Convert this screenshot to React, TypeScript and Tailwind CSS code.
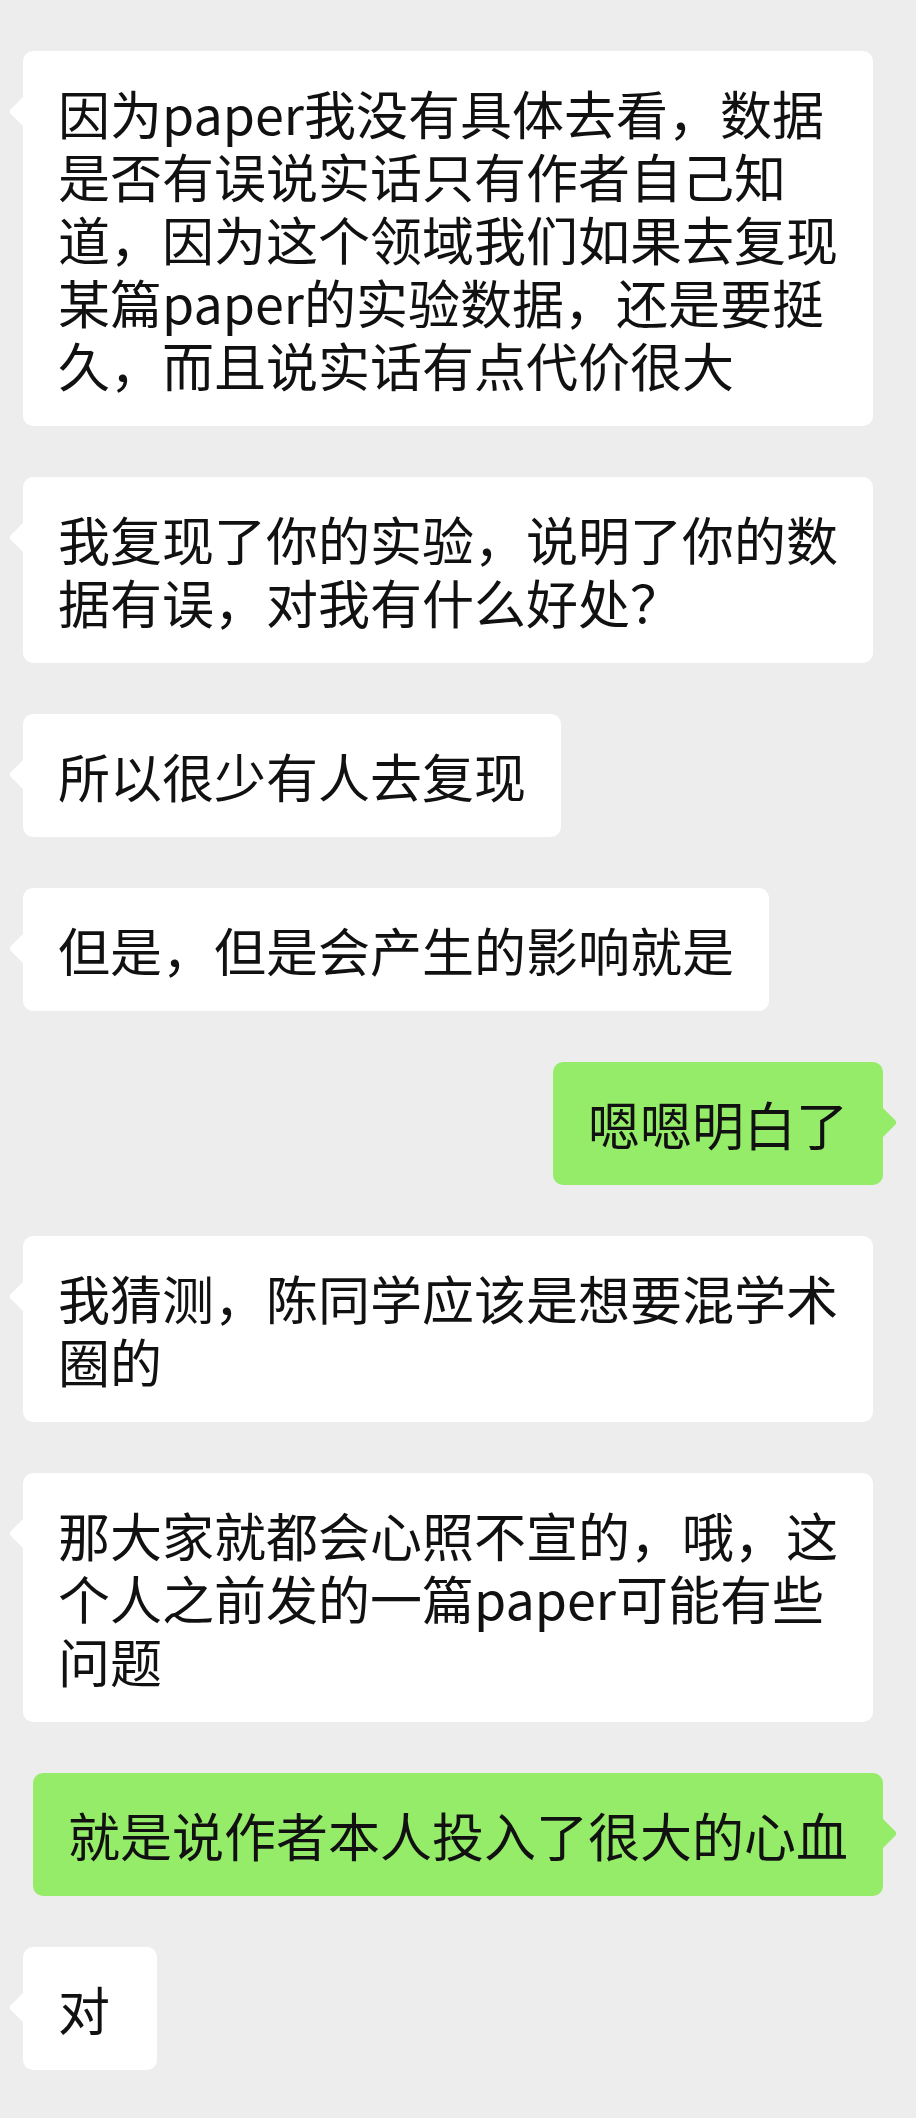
type Message = {
  id: number;
  mine: boolean;
  lines: string[];
};

const messages: Message[] = [
  {
    id: 1,
    mine: false,
    lines: [
      '因为paper我没有具体去看，数据',
      '是否有误说实话只有作者自己知',
      '道，因为这个领域我们如果去复现',
      '某篇paper的实验数据，还是要挺',
      '久，而且说实话有点代价很大',
    ],
  },
  {
    id: 2,
    mine: false,
    lines: ['我复现了你的实验，说明了你的数', '据有误，对我有什么好处？'],
  },
  { id: 3, mine: false, lines: ['所以很少有人去复现'] },
  { id: 4, mine: false, lines: ['但是，但是会产生的影响就是'] },
  { id: 5, mine: true, lines: ['嗯嗯明白了'] },
  {
    id: 6,
    mine: false,
    lines: ['我猜测，陈同学应该是想要混学术', '圈的'],
  },
  {
    id: 7,
    mine: false,
    lines: [
      '那大家就都会心照不宣的，哦，这',
      '个人之前发的一篇paper可能有些',
      '问题',
    ],
  },
  { id: 8, mine: true, lines: ['就是说作者本人投入了很大的心血'] },
  { id: 9, mine: false, lines: ['对'] },
];

function Tail({ mine }: { mine: boolean }) {
  // little arrow pointing at the sender side, centred on the first line
  if (mine) {
    return (
      <svg
        className="absolute top-[45px] right-[-15px] h-[31px] w-[16px] fill-[#95ec69]"
        viewBox="0 0 16 31"
      >
        <path d="M0 0 L13 13 Q15.5 15.5 13 18 L0 31 Z" />
      </svg>
    );
  }
  return (
    <svg
      className="absolute top-[45px] left-[-15px] h-[31px] w-[16px] fill-white"
      viewBox="0 0 16 31"
    >
      <path d="M16 0 L3 13 Q0.5 15.5 3 18 L16 31 Z" />
    </svg>
  );
}

function Bubble({ message }: { message: Message }) {
  const { mine, lines } = message;

  return (
    <div
      className={
        mine
          ? 'relative mr-[33px] self-end rounded-[10px] bg-[#95ec69] px-[35px] py-[30px]'
          : 'relative ml-[23px] min-w-[134px] self-start rounded-[10px] bg-white px-[35px] py-[30px]'
      }
    >
      <Tail mine={mine} />
      {lines.map((line, i) => (
        <div key={i} className="whitespace-nowrap">
          {line}
        </div>
      ))}
    </div>
  );
}

export default function App() {
  return (
    <div
      className="flex min-h-[2118px] w-full flex-col gap-[51px] bg-[#ededed] pt-[51px] pb-[48px] text-[52px] leading-[63px] text-[#111111]"
      style={{ fontFamily: '"Noto Sans CJK SC", "Noto Sans", sans-serif' }}
    >
      {messages.map(message => (
        <Bubble key={message.id} message={message} />
      ))}
    </div>
  );
}
